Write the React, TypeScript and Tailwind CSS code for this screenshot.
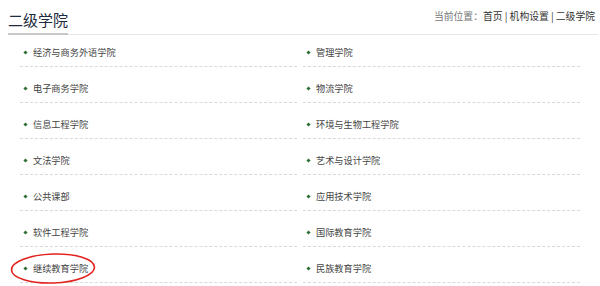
const left = ['经济与商务外语学院', '电子商务学院', '信息工程学院', '文法学院', '公共课部', '软件工程学院', '继续教育学院'];
const right = ['管理学院', '物流学院', '环境与生物工程学院', '艺术与设计学院', '应用技术学院', '国际教育学院', '民族教育学院'];

function Item({ name, circled }: { name: string; circled?: boolean }) {
  return (
    <li className="relative border-b border-dashed border-[#d9d9d9] pt-[14px] pb-[7px] pl-[4px] flex items-center h-[36px]">
      <span className="w-[3px] h-[3px] bg-[#2d6e35] rotate-45 mr-[6px]" />
      <span className="text-[9.2px] leading-[14px] text-[#444]">{name}</span>
      {circled && (
        <svg className="absolute left-[-10px] top-[5px] pointer-events-none" width="86" height="33" viewBox="0 0 86 33">
          <ellipse cx="43" cy="16.5" rx="41.5" ry="14.5" fill="none" stroke="#e3221f" strokeWidth="1.6" transform="rotate(-2 43 16.5)" />
        </svg>
      )}
    </li>
  );
}

export default function App() {
  return (
    <div className="w-[600px] h-[286px] bg-white overflow-hidden" style={{ fontFamily: '"Noto Sans CJK SC", "Noto Sans", sans-serif' }}>
      <div className="ml-[8px] mr-[2px] h-[35px] border-b border-[#e6e6e6] flex items-end justify-between">
        <h1 className="text-[15px] leading-none text-[#1d2b40] pb-[6px] border-b-2 border-[#c8c8c8] -mb-px w-[60px] whitespace-nowrap">二级学院</h1>
        <div className="text-[9.8px] leading-none text-[#333] pb-[12px] pr-[3px] whitespace-nowrap">
          <span className="text-[#777]">当前位置：</span>首页 | 机构设置 | 二级学院
        </div>
      </div>
      <div className="-mt-[4px] ml-[20px] w-[560px] grid grid-cols-2 gap-x-[6px]">
        <ul>
          {left.map((n) => (
            <Item key={n} name={n} circled={n === '继续教育学院'} />
          ))}
        </ul>
        <ul>
          {right.map((n) => (
            <Item key={n} name={n} />
          ))}
        </ul>
      </div>
    </div>
  );
}
